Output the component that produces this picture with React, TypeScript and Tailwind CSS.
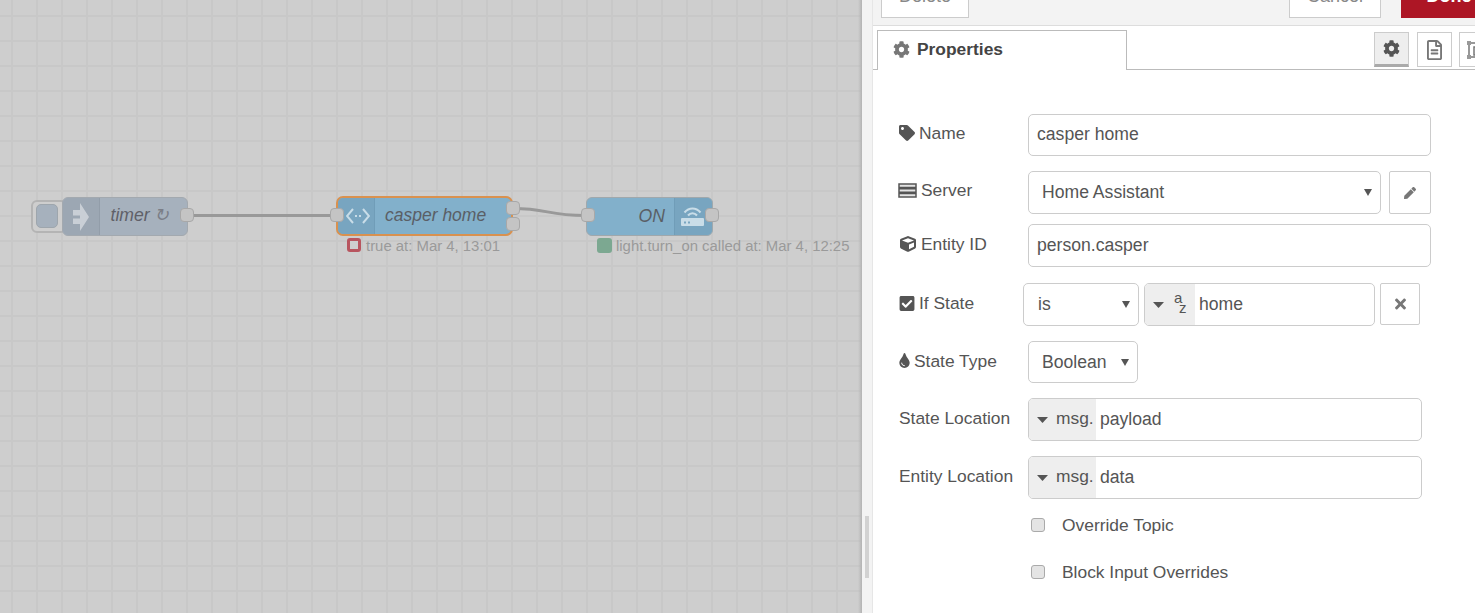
import React from 'react';
import { FaCheckSquare, FaCog, FaCube, FaPen, FaRegFileAlt, FaTag, FaTimes, FaTint } from 'react-icons/fa';

const Caret = ({ className }: { className: string }) => (
  <svg viewBox="0 0 12 7" preserveAspectRatio="none" className={className} fill="currentColor">
    <path d="M0 0h12L6 7z" />
  </svg>
);

const Port = ({ className }: { className: string }) => (
  <div className={`absolute w-[14px] h-[14px] rounded-[4px] bg-[#c4c4c4] border border-[#a8a8a8] ${className}`} />
);

const FieldLabel = ({ icon, text, width = 'w-[129px]', offset = '-mt-[2px]' }: { icon?: React.ReactNode; text: string; width?: string; offset?: string }) => (
  <div className={`flex items-center gap-[4px] shrink-0 text-[17.4px] ${offset} ${width}`}>
    {icon}
    <span>{text}</span>
  </div>
);

const Box = ({ className, children }: { className: string; children: React.ReactNode }) => (
  <div className={`flex items-center bg-white border border-[#ccc] rounded-[5px] text-[17.6px] ${className}`}>{children}</div>
);

const TypedValue = ({ value }: { value: string }) => (
  <Box className="w-[394px] h-[43px] overflow-hidden">
    <div className="flex items-center h-full w-[67px] shrink-0 bg-[#eee] pl-[8px] pb-[2px]">
      <Caret className="w-[11px] h-[6px] mr-[8px] mt-[2px] shrink-0 text-[#555]" />
      <span className="text-[17.4px]">msg.</span>
    </div>
    <span className="pl-[4px]">{value}</span>
  </Box>
);

const CheckRow = ({ label, className }: { label: string; className: string }) => (
  <div className={`flex items-center h-[20px] ml-[132px] ${className}`}>
    <div className="w-[14px] h-[14px] rounded-[3px] bg-[#e4e4e4] border border-[#aaa]" />
    <span className="ml-[17px] text-[17.4px]">{label}</span>
  </div>
);

const Canvas = () => (
  <div className="relative w-[862px] h-full shrink-0 overflow-hidden bg-[#cecece] bg-[image:linear-gradient(to_right,#c8c8c8_2px,transparent_2px),linear-gradient(to_bottom,#c8c8c8_2px,transparent_2px)] bg-[size:25px_25px] bg-[position:11px_15px] font-['Liberation_Sans',sans-serif]">
    <div className="absolute right-0 top-0 w-[4px] h-full bg-gradient-to-r from-transparent to-[#b4b4b4]" />

    <svg className="absolute left-0 top-0 w-[862px] h-[613px]" fill="none" stroke="#999" strokeWidth="3">
      <path d="M187 215.5H336" />
      <path d="M512 208.5C550 208.5 545 215.5 586 215.5" />
    </svg>

    {/* timer */}
    <div className="absolute left-[31px] top-[200px] w-[36px] h-[33px] rounded-[6px] bg-[#cecece] border-2 border-[#b4b4b4]">
      <div className="ml-[3px] mt-[2px] w-[22px] h-[24px] rounded-[5px] bg-[#a6b1bd] border border-[#9ea6ad]" />
    </div>
    <div className="absolute left-[62px] top-[197px] w-[126px] h-[39px] flex rounded-[6px] bg-[#a6b1bd] border border-[#a3a9af] overflow-hidden">
      <div className="flex items-center justify-center w-[37px] bg-[#9ca7b3] border-r border-[#929da9]">
        <svg viewBox="0 0 16 28" className="w-[16px] h-[28px]" fill="#c9cfd6">
          <path d="M7 0l9 14-9 14v-7H0v-5.500h7v-3H0V7h7z" />
        </svg>
      </div>
      <div className="flex-1 text-center pr-[7px] h-[36px] leading-[35px] text-[17.6px] italic text-[#5f6068]">
        timer <span className="leading-none text-[#7b7e87]">↻</span>
      </div>
    </div>
    <Port className="left-[180px] top-[208px]" />

    {/* casper home */}
    <div className="absolute left-[336px] top-[196px] w-[177px] h-[40px] flex rounded-[7px] bg-[#82b0cb] border-2 border-[#d9914f] overflow-hidden">
      <div className="flex items-center justify-center w-[37px] pl-[3px] bg-[#78a5c0] border-r border-[#709db8]">
        <svg viewBox="0 0 24 16" className="w-[24px] h-[16px]" fill="none" stroke="#c9dde8" strokeWidth="2">
          <path d="M7 1L1 8l6 7M17 1l6 7-6 7" />
          <path d="M9 8h6" strokeDasharray="2 2" />
        </svg>
      </div>
      <div className="flex-1 pl-[10px] leading-[35px] text-[17.5px] italic text-[#5a5f66]">casper home</div>
    </div>
    <Port className="left-[330px] top-[208px]" />
    <Port className="left-[506px] top-[201px]" />
    <Port className="left-[506px] top-[217px]" />
    <div className="absolute left-[347px] top-[238px] w-[14px] h-[14px] rounded-[3px] border-[3px] border-[#b8555f] bg-[#cecece]" />
    <div className="absolute left-[366px] top-[237px] text-[14.9px] leading-[18px] text-[#9a9a9a]">true at: Mar 4, 13:01</div>

    {/* ON */}
    <div className="absolute left-[586px] top-[197px] w-[127px] h-[39px] flex rounded-[6px] bg-[#82b0cb] border border-[#a0a8ac] overflow-hidden">
      <div className="flex-1 text-right pr-[9px] leading-[36px] text-[17.6px] italic text-[#5a5f66]">ON</div>
      <div className="flex items-center justify-center w-[38px] pr-[3px] bg-[#78a5c0] border-l border-[#709db8]">
        <svg viewBox="0 0 23 19" className="w-[23px] h-[19px]">
          <path d="M3.500 5.500C8 0 15 0 19.500 5.500M7 8.500C9.500 5.500 13.500 5.500 16 8.500" fill="none" stroke="#c9dde8" strokeWidth="2" />
          <path fillRule="evenodd" fill="#c9dde8" d="M1 11h21a1 1 0 011 1v6a1 1 0 01-1 1H1a1 1 0 01-1-1v-6a1 1 0 011-1zM3 14.500v2h2v-2zM7 14.500v2h2v-2z" />
        </svg>
      </div>
    </div>
    <Port className="left-[581px] top-[208px]" />
    <Port className="left-[705px] top-[208px]" />
    <div className="absolute left-[597px] top-[238px] w-[15px] h-[15px] rounded-[3px] bg-[#7ca891]" />
    <div className="absolute left-[616px] top-[237px] text-[14.9px] leading-[18px] text-[#9a9a9a] whitespace-nowrap">light.turn_on called at: Mar 4, 12:25</div>
  </div>
);

const Sidebar = () => (
  <div className="flex h-full flex-1 min-w-0 font-['Liberation_Sans',sans-serif] text-[#555]">
    <div className="flex items-end w-[11px] shrink-0 bg-[#f3f3f3] border-r border-[#e6e6e6] pl-[3px] pb-[35px]">
      <div className="w-[4px] h-[62px] bg-[#d2d2d2]" />
    </div>
    <div className="flex-1 min-w-0 overflow-hidden bg-white">
      <div className="flex items-end h-[26px] pl-[8px] bg-[#f3f3f3] border-b border-[#ddd] overflow-hidden">
        <div className="flex items-center justify-center shrink-0 w-[88px] h-[44px] mb-[7px] bg-white border border-[#ccc] text-[18px] text-[#888]">Delete</div>
        <div className="flex items-center justify-center shrink-0 w-[92px] h-[44px] mb-[7px] ml-[320px] bg-white border border-[#ccc] text-[18px] text-[#888]">Cancel</div>
        <div className="flex items-center justify-center shrink-0 w-[96px] h-[44px] mb-[7px] ml-[20px] bg-[#ad1625] text-[18px] font-bold text-white">Done</div>
      </div>

      <div className="flex h-[44px] pl-[4px] pt-[4px] border-b border-[#bbb]">
        <div className="flex items-center shrink-0 w-[250px] h-[40px] -mb-[1px] pl-[15px] pb-[2px] bg-white border border-b-0 border-[#bbb] text-[17.4px] font-bold text-[#444]">
          <FaCog className="w-[17px] h-[17px] mr-[7px] text-[#777]" />
          Properties
        </div>
        <div className="flex items-center justify-center shrink-0 w-[35px] h-[35px] ml-[247px] mt-[2px] bg-[#eee] border border-[#ccc] border-b-[3px] border-b-[#aaa] text-[#555]">
          <FaCog className="w-[17px] h-[17px]" />
        </div>
        <div className="flex items-center justify-center shrink-0 w-[35px] h-[35px] ml-[8px] mt-[2px] border border-[#ccc] text-[#777]">
          <FaRegFileAlt className="w-[15px] h-[20px]" />
        </div>
        <div className="flex items-center shrink-0 w-[35px] h-[35px] ml-[7px] mt-[2px] pl-[7px] border border-[#ccc]">
          <svg viewBox="0 0 20 18" className="w-[20px] h-[18px] shrink-0" fill="none" stroke="#777" strokeWidth="1.500">
            <path d="M2 2h14v14H2zM7 6h11v8H7z" />
            <path d="M0 0h4v4H0zM14 0h4v4h-4zM0 14h4v4H0zM14 14h4v4h-4z" fill="#999" stroke="none" />
          </svg>
        </div>
      </div>

      <div className="flex flex-col pl-[26px] pt-[44px]">
        <div className="flex items-center">
          <FieldLabel icon={<FaTag className="w-[16px] h-[16px]" />} text="Name" offset="-mt-[4px]" />
          <Box className="w-[403px] h-[42px] pl-[8px] pb-[2px]">casper home</Box>
        </div>

        <div className="flex items-center mt-[15px]">
          <FieldLabel
            icon={
              <svg viewBox="0 0 19 15" className="w-[19px] h-[15px] -ml-[1px]" fill="#e4e4e4" stroke="#555" strokeWidth="1.500">
                <path d="M1 1h17v3.500H1zM1 5.750h17v3.500H1zM1 10.500h17V14H1z" />
              </svg>
            }
            text="Server"
            offset="-mt-[4px]"
          />
          <Box className="w-[353px] h-[43px] pl-[13px] justify-between pr-[8px]">
            Home Assistant
            <Caret className="w-[8px] h-[7px] text-[#555]" />
          </Box>
          <div className="flex items-center justify-center w-[42px] h-[43px] ml-[8px] border border-[#ccc] rounded-[2px] text-[#777]">
            <FaPen className="w-[12px] h-[12px]" />
          </div>
        </div>

        <div className="flex items-center mt-[10px]">
          <FieldLabel icon={<FaCube className="w-[18px] h-[16px]" />} text="Entity ID" />
          <Box className="w-[403px] h-[43px] pl-[8px]">person.casper</Box>
        </div>

        <div className="flex items-center mt-[16px]">
          <FieldLabel icon={<FaCheckSquare className="w-[16px] h-[17px]" />} text="If State" width="w-[124px]" />
          <Box className="w-[116px] h-[43px] pl-[14px] justify-between pr-[8px]">
            is
            <Caret className="w-[8px] h-[7px] text-[#555]" />
          </Box>
          <Box className="w-[231px] h-[43px] ml-[5px] overflow-hidden">
            <div className="flex items-center h-full w-[50px] shrink-0 bg-[#eee] pl-[8px]">
              <Caret className="w-[11px] h-[6px] shrink-0 text-[#555]" />
              <div className="relative ml-[10px] w-[14px] h-[24px] text-[15px]">
                <span className="absolute left-0 top-0 leading-[10px]">a</span>
                <span className="absolute left-[5px] top-[10px] leading-[10px]">z</span>
              </div>
            </div>
            <span className="pl-[4px]">home</span>
          </Box>
          <div className="flex items-center justify-center w-[40px] h-[42px] ml-[5px] -mt-[2px] border border-[#ccc] rounded-[2px] text-[#777]">
            <FaTimes className="w-[11px] h-[16px]" />
          </div>
        </div>

        <div className="flex items-center mt-[15px]">
          <FieldLabel icon={<FaTint className="w-[11px] h-[15px]" />} text="State Type" />
          <Box className="w-[110px] h-[42px] pl-[13px] justify-between pr-[8px]">
            Boolean
            <Caret className="w-[8px] h-[7px] text-[#555]" />
          </Box>
        </div>

        <div className="flex items-center mt-[15px]">
          <FieldLabel text="State Location" />
          <TypedValue value="payload" />
        </div>

        <div className="flex items-center mt-[15px]">
          <FieldLabel text="Entity Location" />
          <TypedValue value="data" />
        </div>

        <CheckRow label="Override Topic" className="mt-[16px]" />
        <CheckRow label="Block Input Overrides" className="mt-[27px]" />
      </div>
    </div>
  </div>
);

export default function App() {
  return (
    <div className="flex w-[1475px] h-[613px] overflow-hidden">
      <Canvas />
      <Sidebar />
    </div>
  );
}
